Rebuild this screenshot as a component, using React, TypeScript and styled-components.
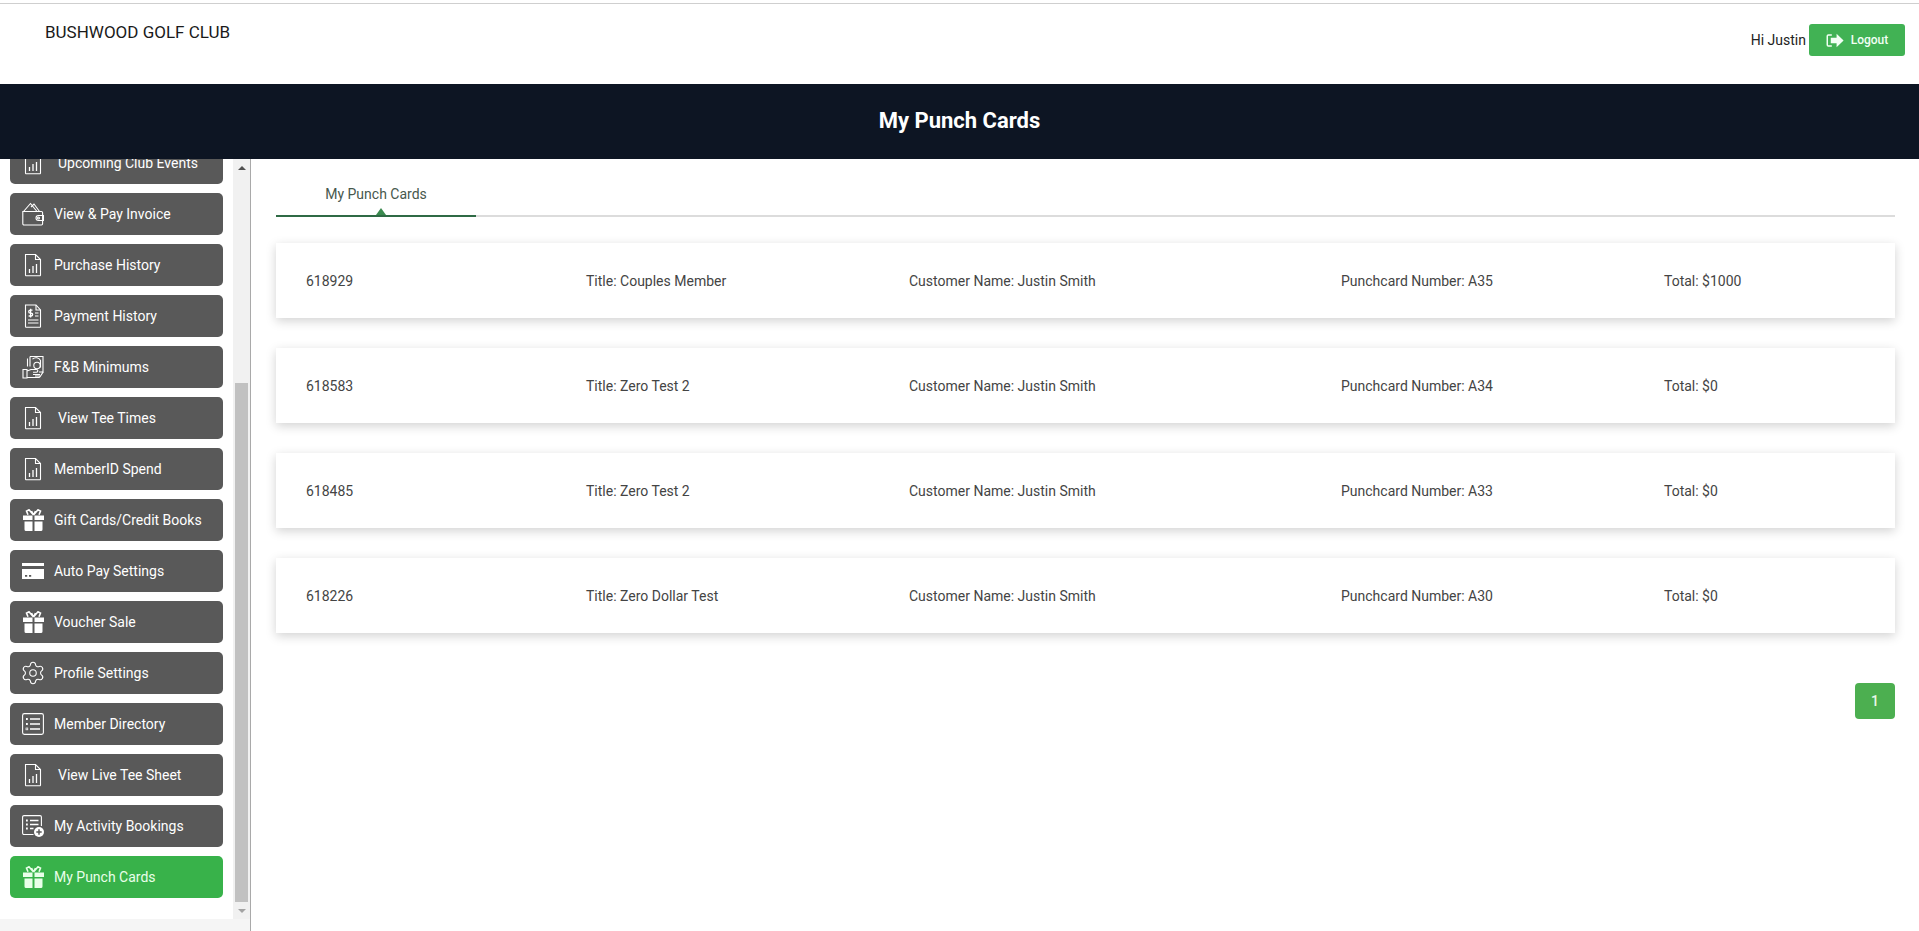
import React from "react";
import styled, { createGlobalStyle } from "styled-components";
import { Settings } from "lucide-react";

const Global = createGlobalStyle`
  html, body { margin: 0; padding: 0; height: 100%; background: #fff; overflow: hidden; }
  body { font-family: Roboto, "Liberation Sans", sans-serif; color: #333; }
  * { box-sizing: border-box; }
`;

const Page = styled.div`
  width: 1919px;
  height: 931px;
  display: flex;
  flex-direction: column;
  overflow: hidden;
`;

const TopBar = styled.header`
  height: 81px;
  margin-top: 3px;
  border-top: 1px solid #cfcfcf;
  display: flex;
  justify-content: space-between;
  padding: 0 14px 0 45px;
  background: #fff;
  flex: none;
`;

const ClubName = styled.div`
  font-size: 17px;
  line-height: 20px;
  color: #1a1a1a;
  margin-top: 18px;
`;

const UserArea = styled.div`
  display: flex;
  align-items: flex-start;
  gap: 3px;
  padding-top: 20px;
`;

const Greeting = styled.span`
  font-size: 14px;
  line-height: 32px;
  color: #222;
`;

const LogoutButton = styled.button`
  width: 96px;
  height: 32px;
  border: 0;
  border-radius: 3px;
  background: #41b254;
  color: #f2fff4;
  font: 500 12px Roboto, sans-serif;
  display: flex;
  align-items: center;
  justify-content: center;
  gap: 7px;
  padding: 0;
`;

const TitleBar = styled.div`
  height: 75px;
  flex: none;
  background: #0d1523;
  display: flex;
  align-items: center;
  justify-content: center;
  padding-bottom: 3px;
`;

const PageTitle = styled.h1`
  margin: 0;
  font-size: 22px;
  font-weight: 700;
  color: #fff;
`;

const Body = styled.div`
  flex: 1;
  display: flex;
  min-height: 0;
`;

const Sidebar = styled.aside`
  width: 251px;
  flex: none;
  display: flex;
  flex-direction: column;
  background: #f5f5f5;
  border-right: 1px solid #a9a9a9;
`;

const SideScroll = styled.div`
  height: 760px;
  display: flex;
  flex: none;
`;

const MenuViewport = styled.nav`
  width: 233px;
  flex: none;
  background: #fff;
  overflow: hidden;
`;

const MenuList = styled.div`
  margin-top: -17px;
  padding: 0 10px;
  display: flex;
  flex-direction: column;
  gap: 9px;
`;

const MenuItem = styled.a<{ $active?: boolean; $indent?: boolean }>`
  height: 42px;
  flex: none;
  display: flex;
  align-items: center;
  padding-left: 12px;
  padding-bottom: 1px;
  gap: ${(p) => (p.$indent ? "14px" : "10px")};
  border-radius: 5px;
  background: ${(p) => (p.$active ? "#38b24a" : "#595959")};
  color: ${(p) => (p.$active ? "#e9ffe9" : "#fff")};
  font-size: 14px;
  font-weight: 400;
  white-space: nowrap;
`;

const IconSlot = styled.span`
  width: 22px;
  height: 24px;
  flex: none;
  display: flex;
  align-items: center;
  justify-content: center;
`;

const ScrollBar = styled.div`
  width: 17px;
  flex: none;
  background: #f1f1f1;
  display: flex;
  flex-direction: column;
  align-items: center;
`;

const ScrollArrow = styled.div<{ $down?: boolean }>`
  height: 17px;
  width: 100%;
  flex: none;
  display: flex;
  align-items: center;
  justify-content: center;
  &::before {
    content: "";
    border-left: 4px solid transparent;
    border-right: 4px solid transparent;
    ${(p) => (p.$down ? "border-top: 4px solid #a3a3a3;" : "border-bottom: 4px solid #505050;")}
  }
`;

const ScrollTrack = styled.div`
  flex: 1;
  width: 100%;
  display: flex;
  flex-direction: column;
  justify-content: flex-end;
  align-items: center;
`;

const ScrollThumb = styled.div`
  width: 13px;
  height: 519px;
  background: #c1c1c1;
`;

const Main = styled.main`
  flex: 1;
  min-width: 0;
  padding: 0 24px 0 25px;
  background: #fff;
`;

const Tabs = styled.div`
  margin-top: 18px;
  height: 40px;
  border-bottom: 2px solid #dcdcdc;
  display: flex;
`;

const Tab = styled.div`
  position: relative;
  width: 200px;
  height: 40px;
  border-bottom: 2px solid #2f6a45;
  color: #47584d;
  font-size: 14px;
  line-height: 34px;
  text-align: center;
  &::after {
    content: "";
    position: absolute;
    left: 100px;
    bottom: 0;
    border-left: 5px solid transparent;
    border-right: 5px solid transparent;
    border-bottom: 7px solid #3b8a4f;
  }
`;

const Cards = styled.div`
  margin-top: 26px;
  display: flex;
  flex-direction: column;
  gap: 30px;
`;

const Card = styled.div`
  height: 75px;
  padding: 0 30px;
  background: #fff;
  box-shadow: 0 3px 10px rgba(0, 0, 0, 0.18);
  display: grid;
  grid-template-columns: 280px 323px 432px 323px 1fr;
  align-items: center;
  font-size: 14px;
  color: #444;
`;

const Pager = styled.div`
  margin-top: 50px;
  display: flex;
  justify-content: flex-end;
`;

const PageButton = styled.button`
  width: 40px;
  height: 36px;
  border: 0;
  border-radius: 4px;
  background: #4caf50;
  color: #e8f7e9;
  font: 500 14px Roboto, sans-serif;
  padding: 0;
`;

type SvgProps = { children: React.ReactNode; w?: number; h?: number };
const Svg = ({ children, w = 22, h = 24 }: SvgProps) => (
  <svg width={w} height={h} viewBox="0 0 22 24" fill="none" stroke="currentColor" strokeWidth={1.1}>
    {children}
  </svg>
);

const DocChart = () => (
  <Svg>
    <path d="M3.5 1.5h10l5 5v15.5a.8.8 0 0 1-.8.8H4.3a.8.8 0 0 1-.8-.8V1.5z" />
    <path d="M13.5 1.5v5h5" />
    <path d="M7.5 20v-4M11 20v-7M14.5 20v-9" strokeWidth={1.3} />
  </Svg>
);

const Wallet = () => (
  <Svg>
    <path d="M.8 9.5h18.6a1.2 1.2 0 0 1 1.2 1.2v11.1a1.2 1.2 0 0 1-1.2 1.2H2a1.2 1.2 0 0 1-1.2-1.2V9.5z" />
    <path d="M1.5 9.5 8.5 1.5l6.5 8M9 5l3-3 5.5 7.5" />
    <path d="M21.5 13.5h-5a2.5 2.5 0 0 0 0 5h5v-5z" />
    <circle cx="16.5" cy="16" r="1" />
  </Svg>
);

const Receipt = () => (
  <Svg>
    <path d="M3.5 1h10.5l4.5 5v16.5a.8.8 0 0 1-.8.8H4.3a.8.8 0 0 1-.8-.8V1z" />
    <path d="M14 1v5h4.5" />
    <path d="M10.5 6.2H8.2a1.4 1.4 0 0 0 0 2.9h1a1.4 1.4 0 0 1 0 2.9H6.6M8.6 4.8V13.4" strokeWidth={1.3} />
    <path d="M13 9h3.5M13 12h3.5M6 16h10.5M6 19h10.5" strokeWidth={1.2} />
  </Svg>
);

const Money = () => (
  <Svg>
    <path d="M8 1.5h13v15.5h-4M8 1.5v10" />
    <path d="M5.5 3.5v8M10.5 4.2a5 5 0 0 1 8 1.3v7" />
    <circle cx="15" cy="10.5" r="3.2" />
    <path d="M1 14.5h4v8.5H1zM5 16l4-1.5h5.5a1.3 1.3 0 0 1 0 2.7H11M5 22.5h12a1 1 0 0 0 .9-.6l3.3-5M11 19.5h7M13 21h5" />
  </Svg>
);

const Gift = () => (
  <svg width="21" height="22" viewBox="0 0 21 22" fill="currentColor">
    <path d="M0 6.5h9.5V11H0zM11.5 6.5H21V11h-9.5zM1.5 12.5h8V22h-6.5a1.5 1.5 0 0 1-1.5-1.5zM11.5 12.5h8v8a1.5 1.5 0 0 1-1.5 1.5h-6.5z" />
    <path d="M10.5 6 6 .8 3.5 2.2 5 5.8M10.5 6 15 .8l2.5 1.4L16 5.8M10.5 6 8.5 2M10.5 6l2-4" fill="none" stroke="currentColor" strokeWidth="1.6" />
  </svg>
);

const CreditCard = () => (
  <svg width="22" height="16" viewBox="0 0 22 16" fill="currentColor">
    <rect x="0" y="0" width="22" height="3" />
    <path d="M0 6h22v10H0zM3 12v1.8h2.2V12zM7 12v1.8h2.2V12z" fillRule="evenodd" />
  </svg>
);

const ListBox = () => (
  <svg width="22" height="22" viewBox="0 0 22 22" fill="none" stroke="currentColor" strokeWidth="1.1">
    <rect x=".6" y=".6" width="20.8" height="20.8" rx="1.8" />
    <path d="M8 6h10M8 11h10M8 16h10" strokeWidth="1.4" />
    <path d="M4 6h1.8M4 11h1.8" strokeWidth="1.8" />
    <rect x="4" y="15" width="1.8" height="1.8" strokeWidth=".7" />
  </svg>
);

const ListPlus = () => (
  <svg width="22" height="22" viewBox="0 0 22 22" fill="none" stroke="currentColor" strokeWidth="1.1">
    <path d="M11.5 19.5H2a1.4 1.4 0 0 1-1.4-1.4V2A1.4 1.4 0 0 1 2 .6h16a1.4 1.4 0 0 1 1.4 1.4v9" />
    <path d="M8 5.5h8.5M8 9.5h8.5M8 13.5h3.5" strokeWidth="1.5" />
    <path d="M4 5.5h1.8M4 9.5h1.8M4 13.5h1.8" strokeWidth="1.8" />
    <circle cx="17" cy="17" r="5" fill="currentColor" stroke="none" />
    <path d="M17 14.3v5.4M14.3 17h5.4" stroke="#595959" strokeWidth="1.5" />
  </svg>
);

const LogoutIcon = () => (
  <svg width="18" height="15" viewBox="0 0 17 14" fill="currentColor">
    <path d="M5.5 1H2.2A1.7 1.7 0 0 0 .5 2.7v8.6A1.7 1.7 0 0 0 2.2 13h3.3v-1.4H2.4a.5.5 0 0 1-.5-.5V2.9a.5.5 0 0 1 .5-.5h3.1z" />
    <path d="M10 .6 16.6 7 10 13.4V9.6H4.5V4.4H10z" />
  </svg>
);

const GearIcon = styled(Settings)`
  flex: none;
`;

const menu: { label: string; icon: React.ReactNode; indent?: boolean; active?: boolean }[] = [
  { label: "Upcoming Club Events", icon: <DocChart />, indent: true },
  { label: "View & Pay Invoice", icon: <Wallet /> },
  { label: "Purchase History", icon: <DocChart /> },
  { label: "Payment History", icon: <Receipt /> },
  { label: "F&B Minimums", icon: <Money /> },
  { label: "View Tee Times", icon: <DocChart />, indent: true },
  { label: "MemberID Spend", icon: <DocChart /> },
  { label: "Gift Cards/Credit Books", icon: <Gift /> },
  { label: "Auto Pay Settings", icon: <CreditCard /> },
  { label: "Voucher Sale", icon: <Gift /> },
  { label: "Profile Settings", icon: <GearIcon size={26} strokeWidth={1} /> },
  { label: "Member Directory", icon: <ListBox /> },
  { label: "View Live Tee Sheet", icon: <DocChart />, indent: true },
  { label: "My Activity Bookings", icon: <ListPlus /> },
  { label: "My Punch Cards", icon: <Gift />, active: true },
];

const cards = [
  ["618929", "Title: Couples Member", "Customer Name: Justin Smith", "Punchcard Number: A35", "Total: $1000"],
  ["618583", "Title: Zero Test 2", "Customer Name: Justin Smith", "Punchcard Number: A34", "Total: $0"],
  ["618485", "Title: Zero Test 2", "Customer Name: Justin Smith", "Punchcard Number: A33", "Total: $0"],
  ["618226", "Title: Zero Dollar Test", "Customer Name: Justin Smith", "Punchcard Number: A30", "Total: $0"],
];

export default function App() {
  return (
    <Page>
      <Global />
      <TopBar>
        <ClubName>BUSHWOOD GOLF CLUB</ClubName>
        <UserArea>
          <Greeting>Hi Justin</Greeting>
          <LogoutButton>
            <LogoutIcon />
            Logout
          </LogoutButton>
        </UserArea>
      </TopBar>
      <TitleBar>
        <PageTitle>My Punch Cards</PageTitle>
      </TitleBar>
      <Body>
        <Sidebar>
          <SideScroll>
            <MenuViewport>
              <MenuList>
                {menu.map((m) => (
                  <MenuItem key={m.label} $active={m.active} $indent={m.indent}>
                    <IconSlot>{m.icon}</IconSlot>
                    {m.label}
                  </MenuItem>
                ))}
              </MenuList>
            </MenuViewport>
            <ScrollBar>
              <ScrollArrow />
              <ScrollTrack>
                <ScrollThumb />
              </ScrollTrack>
              <ScrollArrow $down />
            </ScrollBar>
          </SideScroll>
        </Sidebar>
        <Main>
          <Tabs>
            <Tab>My Punch Cards</Tab>
          </Tabs>
          <Cards>
            {cards.map((c) => (
              <Card key={c[0]}>
                {c.map((t) => (
                  <span key={t}>{t}</span>
                ))}
              </Card>
            ))}
          </Cards>
          <Pager>
            <PageButton>1</PageButton>
          </Pager>
        </Main>
      </Body>
    </Page>
  );
}
